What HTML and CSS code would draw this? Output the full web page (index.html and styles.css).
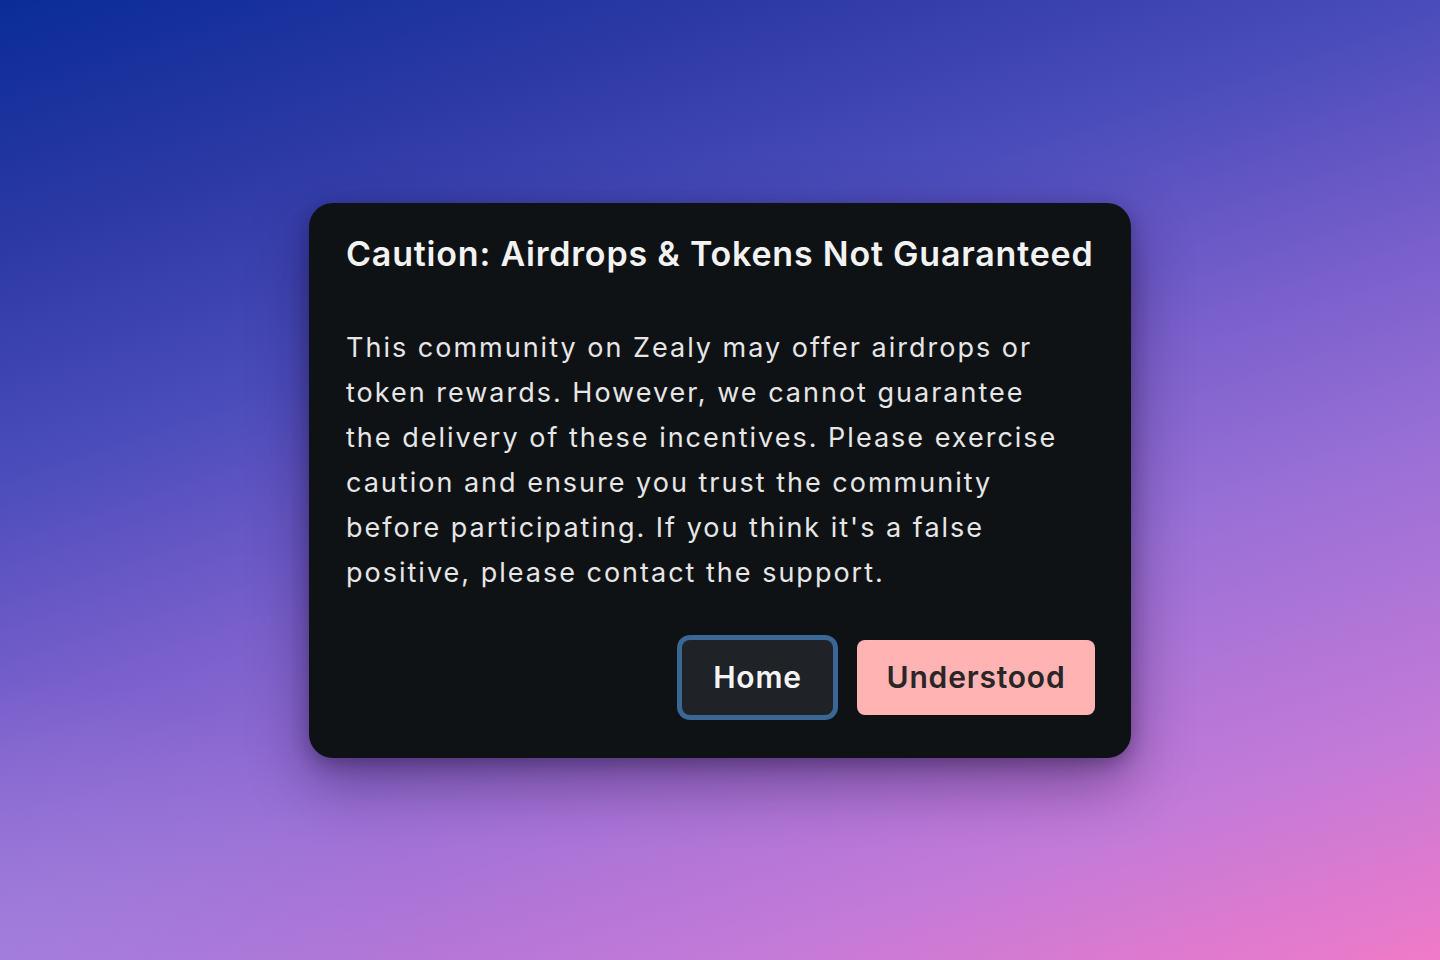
FILE: index.html
```html
<!DOCTYPE html>
<html lang="en">
<head>
<meta charset="utf-8">
<title>Caution</title>
<link rel="stylesheet" href="styles.css">
</head>
<body>
<main class="backdrop">
  <section class="dialog" role="dialog" aria-labelledby="dlg-title">
    <h2 id="dlg-title" class="dialog-title">Caution: Airdrops &amp; Tokens Not Guaranteed</h2>
    <p class="dialog-text">This community on Zealy may offer airdrops or token rewards. However, we cannot guarantee the delivery of these incentives. Please exercise caution and ensure you trust the community before participating. If you think it's a false positive, please contact the support.</p>
    <div class="dialog-actions">
      <button class="btn btn-home" type="button">Home</button>
      <button class="btn btn-ok" type="button">Understood</button>
    </div>
  </section>
</main>
</body>
</html>
```
FILE: styles.css
```css
* { box-sizing: border-box; }
html, body { margin: 0; padding: 0; }
body {
  width: 1440px;
  height: 960px;
  overflow: hidden;
  font-family: "Inter", "Noto Sans", sans-serif;
}
.backdrop {
  width: 1440px;
  height: 960px;
  display: flex;
  align-items: center;
  justify-content: center;
  background:
    radial-gradient(ellipse 600px 400px at 0% 100%, rgba(168,140,224,0.45), rgba(168,140,224,0) 70%),
    linear-gradient(162deg, #0a2c96 0%, #2a38a4 16%, #4a4cbb 33%, #7a60cc 50%, #9a70d6 64%, #c47ad8 84%, #f07ac8 100%);
}
.dialog {
  width: 822px;
  height: 555px;
  background: #0f1215;
  border-radius: 24px;
  padding: 30px 36px 43px 37px;
  box-shadow: 0 24px 60px rgba(30, 10, 60, 0.45), 0 6px 18px rgba(20, 10, 40, 0.3);
  display: flex;
  flex-direction: column;
}
.dialog-title {
  margin: 0;
  color: #f2f2f2;
  font-size: 34px;
  font-weight: 600;
  line-height: 42px;
  letter-spacing: 0.8px;
}
.dialog-text {
  margin: 50px 0 0 0;
  width: 730px;
  color: #e6e6e6;
  font-size: 27px;
  font-weight: 400;
  line-height: 45px;
  letter-spacing: 2px;
}
.dialog-actions {
  margin-top: auto;
  display: flex;
  justify-content: flex-end;
  gap: 24px;
}
.btn {
  height: 75px;
  border: none;
  border-radius: 8px;
  font-family: inherit;
  font-size: 30px;
  font-weight: 600;
  letter-spacing: 0.8px;
  padding: 0;
  cursor: pointer;
}
.btn-home {
  width: 151px;
  background: #1f2226;
  color: #f4f4f4;
  box-shadow: 0 0 0 5px #3a6793;
}
.btn-ok {
  width: 238px;
  background: #ffb3b3;
  color: #2a2628;
}
```
